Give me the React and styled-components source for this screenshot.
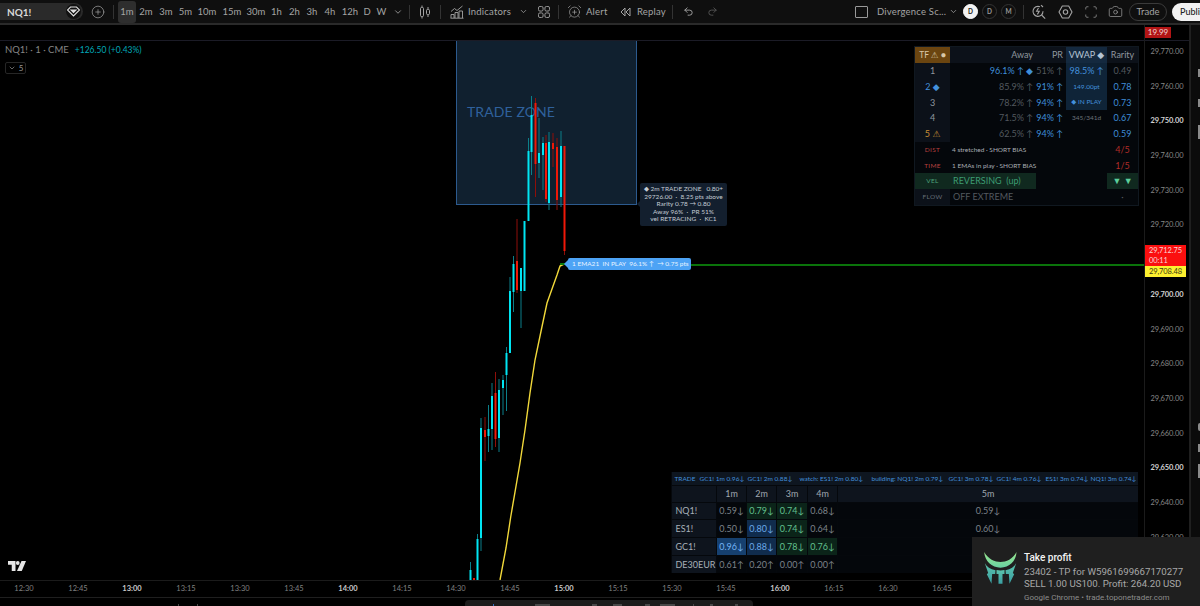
import React from "react";
import styled, { createGlobalStyle } from "styled-components";
import { ChevronDown, CirclePlus, AlarmClockPlus, Undo2, Redo2, Scan, Camera } from "lucide-react";

const GlobalStyle = createGlobalStyle`
  html, body {
    margin: 0;
    padding: 0;
    background: #000;
  }
  * {
    box-sizing: border-box;
  }
`;

const intervals = [
  ["1m", 18, true],
  ["2m", 20],
  ["3m", 20],
  ["5m", 19],
  ["10m", 24],
  ["15m", 26],
  ["30m", 22],
  ["1h", 19],
  ["2h", 17],
  ["3h", 18],
  ["4h", 18],
  ["12h", 22],
  ["D", 12],
  ["W", 17],
];

const prices = [
  ["29,770.00"],
  ["29,760.00"],
  ["29,750.00", true],
  ["29,740.00"],
  ["29,730.00"],
  ["29,720.00"],
  [""],
  ["29,700.00", true],
  ["29,690.00"],
  ["29,680.00"],
  ["29,670.00"],
  ["29,660.00"],
  ["29,650.00", true],
  ["29,640.00"],
  ["29,630.00"],
];

const times = [
  ["12:30"], ["12:45"], ["13:00", true], ["13:15"], ["13:30"], ["13:45"], ["14:00", true],
  ["14:15"], ["14:30"], ["14:45"], ["15:00", true], ["15:15"], ["15:30"], ["15:45"],
  ["16:00", true], ["16:15"], ["16:30"], ["16:45"],
];

// x, wick top, wick bottom, body top, body bottom, up?
const candles = [
  [470.5, 562, 580, 570, 580, true],
  [474, 578, 580, 578, 580, false],
  [477.5, 534, 580, 539, 580, true],
  [481, 418, 551, 428, 538, true],
  [485, 417, 461, 430, 437, false],
  [488.5, 405, 452, 429, 436, true],
  [492, 383, 450, 396, 429, true],
  [495.5, 372, 447, 393, 439, false],
  [499, 379, 452, 390, 438, true],
  [503, 375, 415, 380, 388, true],
  [506.5, 347, 411, 353, 375, true],
  [510, 277, 353, 291, 353, true],
  [513.5, 256, 312, 264, 292, true],
  [517, 219, 293, 261, 290, false],
  [521, 268, 328, 268, 291, true],
  [524.5, 221, 291, 221, 291, true],
  [528.5, 138, 221, 151, 221, true],
  [531.5, 96, 175, 115, 152, true],
  [535.5, 98, 197, 103, 164, false],
  [539, 118, 178, 153, 163, true],
  [543, 137, 190, 143, 155, true],
  [546, 135, 202, 143, 199, false],
  [549, 132, 210, 142, 203, true],
  [553, 133, 167, 143, 149, false],
  [557, 138, 210, 147, 200, false],
  [561, 131, 207, 146, 197, true],
  [564.5, 146, 255, 146, 251, false],
];

const awayRows = [
  { tf: "1", away: "96.1% ↑ ◆", hot: true, pr: "51% ↑", prHot: false, vwap: "98.5% ↑", rarity: "0.49", rare: false },
  { tf: "2 ◆", tfTone: "blue", away: "85.9% ↑", pr: "91% ↑", prHot: true, note: "149.00pt", rarity: "0.78", rare: true },
  { tf: "3", away: "78.2% ↑", pr: "94% ↑", prHot: true, note: "◆ IN PLAY", rarity: "0.73", rare: true },
  { tf: "4", away: "71.5% ↑", pr: "94% ↑", prHot: true, plain: "345/341d", rarity: "0.67", rare: true },
  { tf: "5 ⚠", tfTone: "orange", away: "62.5% ↑", pr: "94% ↑", prHot: true, rarity: "0.59", rare: true },
];

const scanRows = [
  ["NQ1!", ["0.59↓"], ["0.79↓", "green"], ["0.74↓", "green"], ["0.68↓"], ["0.59↓"]],
  ["ES1!", ["0.50↓"], ["0.80↓", "blue"], ["0.74↓", "green"], ["0.64↓"], ["0.60↓"]],
  ["GC1!", ["0.96↓", "strong"], ["0.88↓", "blue"], ["0.78↓", "green"], ["0.76↓", "green"], [""]],
  ["DE30EUR", ["0.61↑"], ["0.20↑"], ["0.00↑"], ["0.00↑"], [""]],
];

const banner = [
  ["TRADE", 25],
  ["GC1! 1m 0.96↓", 48],
  ["GC1! 2m 0.88↓", 52],
  ["watch: ES1! 2m 0.80↓", 72],
  ["building: NQ1! 2m 0.79↓", 77],
  ["GC1! 3m 0.78↓", 48],
  ["GC1! 4m 0.76↓", 49],
  ["ES1! 3m 0.74↓", 45],
  ["NQ1! 3m 0.74↓", 46],
];

const footerMarks = [
  { ml: 178, w: 1 },
  { ml: 18, w: 1 },
];

const tabMarks = [
  { ml: 28, w: 1, color: "#2f6fc0" },
  { ml: 41, w: 15 },
  { ml: 42, w: 5 },
  { ml: 16, w: 9 },
  { ml: 23, w: 5 },
  { ml: 10, w: 15 },
  { ml: 18, w: 1 },
  { ml: 16, w: 3 },
  { ml: 22, w: 3 },
];

const CandleIcon = () => (
  <svg width="14" height="14" viewBox="0 0 14 14" fill="none" stroke="currentColor" strokeWidth="1">
    <path d="M4 0.5v2M4 11.5v2M10 2v2.5M10 9.5V12" />
    <rect x="2.5" y="2.5" width="3" height="9" rx="1" />
    <rect x="8.5" y="4.5" width="3" height="5" rx="1" />
  </svg>
);

const IndicatorsIcon = () => (
  <svg width="14" height="14" viewBox="0 0 14 14" fill="none" stroke="currentColor" strokeWidth="0.9">
    <path d="M1 6.5 4.5 3.5 7 5.5 12.5 1" />
    <path d="M1 13V9.5h3V13M5 13V7.5h3V13M9 13V6h3.5v7" />
    <path d="M0.5 13.2h13" />
  </svg>
);

const GridIcon = () => (
  <svg width="12" height="12" viewBox="0 0 13 13" fill="none" stroke="currentColor" strokeWidth="1">
    <rect x="0.5" y="0.5" width="5" height="5" rx="1.6" />
    <rect x="7.5" y="0.5" width="5" height="5" rx="1.6" />
    <rect x="0.5" y="7.5" width="5" height="5" rx="1.6" />
    <rect x="7.5" y="7.5" width="5" height="5" rx="1.6" />
  </svg>
);

const ReplayIcon = () => (
  <svg width="11" height="10" viewBox="0 0 11 10" fill="none" stroke="currentColor" strokeWidth="1">
    <path d="M5 1 1 5l4 4ZM10 1 6 5l4 4Z" />
  </svg>
);

const DiamondIcon = () => (
  <svg width="13" height="11" viewBox="0 0 13 11" fill="none" stroke="currentColor" strokeWidth="1.1">
    <path d="M3.5 1h6l3 3-6 6-6-6Z" />
    <path d="M4 4h5L6.5 6.5Z" fill="currentColor" />
  </svg>
);

const MagicIcon = () => (
  <svg width="16" height="16" viewBox="0 0 16 16" fill="none" stroke="currentColor" strokeWidth="1.1">
    <path d="M9 2.8a5 5 0 1 0 3 4.5" />
    <path d="M7.5 4 5.6 7.3h2.6L6.4 10.4" />
    <path d="M10.6 11l3.6 3.6" />
    <path d="M10 1.2 12 3" />
  </svg>
);

const SettingsIcon = () => (
  <svg width="15" height="14" viewBox="0 0 15 14" fill="none" stroke="currentColor" strokeWidth="1.1">
    <path d="M4.3 1h6.4l3.3 6-3.3 6H4.3L1 7Z" strokeLinejoin="round" />
    <circle cx="7.5" cy="7" r="2.2" />
  </svg>
);

const TvLogo = () => (
  <svg width="20" height="10" viewBox="0 0 36 20" fill="#e6e6e6">
    <path d="M0 0h15v20H7.5V7.5H0Z" />
    <circle cx="19.5" cy="4" r="3.8" />
    <path d="M27 0h9l-8.5 20H18Z" />
  </svg>
);

const ProfitLogo = () => (
  <svg width="37" height="35" viewBox="60 80 110 105">
    <defs>
      <linearGradient id="horn" x1="0" y1="0" x2="0" y2="1">
        <stop offset="0" stopColor="#9ae68d" />
        <stop offset="1" stopColor="#68d2a2" />
      </linearGradient>
      <linearGradient id="body" x1="0" y1="0" x2="0" y2="1">
        <stop offset="0" stopColor="#5cc4ac" />
        <stop offset="1" stopColor="#3a9ea2" />
      </linearGradient>
    </defs>
    <path d="M66 83C78 104 98 113 115 113S152 104 163 83C162 110 141 130 115 130S68 110 66 83Z" fill="url(#horn)" />
    <path d="M68 117C74 128 84 135 100 138L99 149H90L88 178 74 150 78 146Z" fill="url(#body)" />
    <path d="M162 117C156 128 146 135 130 138L131 149H140L142 178 156 150 152 146Z" fill="url(#body)" />
    <path d="M103 137C111 139 119 139 127 137V149H121V178H109V149H103Z" fill="url(#body)" />
  </svg>
);

const App = () => {
  return (
    <Page>
      <GlobalStyle />
      <Toolbar>
        <SymbolPill>
          <span>NQ1!</span>
          <SymbolBadge>
            <DiamondIcon />
          </SymbolBadge>
        </SymbolPill>
        <ToolSlot $w={30}>
          <CirclePlus size={14} strokeWidth={1.2} />
        </ToolSlot>
        <Divider />
        <Gap $w={4} />
        {intervals.map(([label, w, active]) => (
          <IntervalButton key={label} $w={w} $active={active}>
            {label}
          </IntervalButton>
        ))}
        <ToolSlot $w={15}>
          <ChevronDown size={10} />
        </ToolSlot>
        <Gap $w={4} />
        <Divider />
        <ToolSlot $w={30}>
          <CandleIcon />
        </ToolSlot>
        <Divider />
        <Gap $w={9} />
        <IndicatorsIcon />
        <ToolLabel $ml={4} $w={50}>Indicators</ToolLabel>
        <ToolSlot $w={11}>
          <ChevronDown size={9} />
        </ToolSlot>
        <ToolSlot $w={29}>
          <GridIcon />
        </ToolSlot>
        <Divider />
        <Gap $w={8} />
        <AlarmClockPlus size={15} strokeWidth={1.1} />
        <ToolLabel $ml={4} $w={27}>Alert</ToolLabel>
        <Gap $w={7} />
        <ReplayIcon />
        <ToolLabel $ml={6} $w={35}>Replay</ToolLabel>
        <Divider />
        <ToolSlot $w={30}>
          <Undo2 size={11} />
        </ToolSlot>
        <ToolSlot $w={18} $dim>
          <Redo2 size={11} />
        </ToolSlot>
        <Spacer />
        <CheckBox />
        <ToolLabel $ml={9} $w={70}>Divergence Sc...</ToolLabel>
        <ToolSlot $w={13}>
          <ChevronDown size={9} />
        </ToolSlot>
        <Gap $w={3} />
        <ModeDot $on>D</ModeDot>
        <ModeDot>D</ModeDot>
        <ModeDot>M</ModeDot>
        <Gap $w={3} />
        <Divider />
        <ToolSlot $w={29}>
          <MagicIcon />
        </ToolSlot>
        <ToolSlot $w={25}>
          <SettingsIcon />
        </ToolSlot>
        <ToolSlot $w={25}>
          <Scan size={14} strokeWidth={1.2} />
        </ToolSlot>
        <ToolSlot $w={25}>
          <Camera size={15} strokeWidth={1.1} />
        </ToolSlot>
        <Gap $w={1} />
        <TradePill>Trade</TradePill>
        <PublishPill>Publish</PublishPill>
      </Toolbar>
      <Band />
      <Body>
        <Workspace>
          <ChartRow>
            <ChartColumn>
              <TopStrip />
              <Chart>
                <ChartDrawing viewBox="0 41 1144 539">
                  {candles.map(([x, wickTop, wickBottom, bodyTop, bodyBottom, up]) => (
                    <g key={x}>
                      <line x1={x} x2={x} y1={wickTop} y2={wickBottom} stroke={up ? "#0b7f8a" : "#8f0f0a"} strokeWidth="1" />
                      <line x1={x} x2={x} y1={bodyTop} y2={bodyBottom} stroke={up ? "#00e5f2" : "#f01808"} strokeWidth="2" />
                    </g>
                  ))}
                  <path
                    d="M500 580 506 548 510.7 517 520 463 525 430 530 393 535 360 541.7 328 547 303 552.7 287 557 275 560 266 564 264"
                    fill="none"
                    stroke="#f2d93a"
                    strokeWidth="1.4"
                  />
                  <line x1="560" x2="566" y1="264" y2="264" stroke="#0a7a0a" strokeWidth="2" />
                  <line x1="691" x2="1144" y1="265" y2="265" stroke="#0a730a" strokeWidth="2" />
                </ChartDrawing>

                <Legend>
                  <LegendLine>
                    <LegendTitle>NQ1! · 1 · CME</LegendTitle>
                    <LegendChange>+126.50 (+0.43%)</LegendChange>
                  </LegendLine>
                  <LegendToggle>
                    <ChevronDown size={8} />5
                  </LegendToggle>
                </Legend>

                <TradeZone>
                  <TradeZoneLabel>TRADE ZONE</TradeZoneLabel>
                </TradeZone>

                <ZoneTip>
                  <div>◆ 2m TRADE ZONE &nbsp; 0.80+</div>
                  <div>29726.00 &nbsp;·&nbsp; 8.25 pts above</div>
                  <div>Rarity 0.78 → 0.80</div>
                  <div>Away 96% &nbsp;·&nbsp; PR 51%</div>
                  <div>vel RETRACING &nbsp;·&nbsp; KC1</div>
                </ZoneTip>

                <EmaTag>1 EMA21 &nbsp;IN PLAY &nbsp;96.1% ↑ &nbsp;→ 0.75 pts</EmaTag>

                <AwayPanel>
                  <colgroup>
                    <col style={{ width: 35 }} />
                    <col style={{ width: 86 }} />
                    <col style={{ width: 30 }} />
                    <col style={{ width: 41 }} />
                    <col style={{ width: 31 }} />
                  </colgroup>
                  <thead>
                    <tr>
                      <TfHead>TF ⚠ ●</TfHead>
                      <HeadCell $align="right">Away</HeadCell>
                      <HeadCell $align="right">PR</HeadCell>
                      <VwapHead>VWAP ◆</VwapHead>
                      <HeadCell>Rarity</HeadCell>
                    </tr>
                  </thead>
                  <tbody>
                    {awayRows.map((row) => (
                      <tr key={row.tf}>
                        <TfCell $tone={row.tfTone}>{row.tf}</TfCell>
                        <ValueCell $align="right" $hot={row.hot}>{row.away}</ValueCell>
                        <ValueCell $align="right" $hot={row.prHot}>{row.pr}</ValueCell>
                        {row.plain ? (
                          <SmallCell>{row.plain}</SmallCell>
                        ) : row.note ? (
                          <VwapCell $small>{row.note}</VwapCell>
                        ) : row.vwap ? (
                          <VwapCell>{row.vwap}</VwapCell>
                        ) : (
                          <SmallCell />
                        )}
                        <ValueCell $align="center" $hot={row.rare}>{row.rarity}</ValueCell>
                      </tr>
                    ))}
                    <tr>
                      <TagCell $tone="#b8413f">DIST</TagCell>
                      <NoteCell colSpan={3}>4 stretched · SHORT BIAS</NoteCell>
                      <ScoreCell>4/5</ScoreCell>
                    </tr>
                    <tr>
                      <TagCell $tone="#b8413f">TIME</TagCell>
                      <NoteCell colSpan={3}>1 EMAs in play · SHORT BIAS</NoteCell>
                      <ScoreCell>1/5</ScoreCell>
                    </tr>
                    <tr>
                      <VelTag>VEL</VelTag>
                      <VelCell>REVERSING &nbsp;(up)</VelCell>
                      <td colSpan={2} />
                      <VelArrows>▼&nbsp;▼</VelArrows>
                    </tr>
                    <tr>
                      <TagCell $tone="#666d76" $shade>FLOW</TagCell>
                      <FlowCell colSpan={3}>OFF EXTREME</FlowCell>
                      <ValueCell $align="center">·</ValueCell>
                    </tr>
                  </tbody>
                </AwayPanel>

                <ScanPanel>
                  <colgroup>
                    <col style={{ width: 45 }} />
                    <col style={{ width: 30 }} />
                    <col style={{ width: 30 }} />
                    <col style={{ width: 31 }} />
                    <col style={{ width: 30 }} />
                    <col />
                  </colgroup>
                  <thead>
                    <tr>
                      <BannerCell colSpan={6}>
                        <BannerRow>
                          {banner.map(([text, w]) => (
                            <BannerItem key={text} $w={w}>{text}</BannerItem>
                          ))}
                        </BannerRow>
                      </BannerCell>
                    </tr>
                    <tr>
                      <ScanHead />
                      {["1m", "2m", "3m", "4m", "5m"].map((tf) => (
                        <ScanHead key={tf}>{tf}</ScanHead>
                      ))}
                    </tr>
                  </thead>
                  <tbody>
                    {scanRows.map(([symbol, ...cells]) => (
                      <tr key={symbol}>
                        <ScanSymbol>{symbol}</ScanSymbol>
                        {cells.map(([value, tone], i) => (
                          <ScanValue key={i} $tone={tone}>{value}</ScanValue>
                        ))}
                      </tr>
                    ))}
                  </tbody>
                </ScanPanel>

                <Watermark>
                  <TvLogo />
                </Watermark>
              </Chart>
            </ChartColumn>
            <PriceAxis>
              <PriceHead>
                <CountTag>19.99</CountTag>
              </PriceHead>
              <PriceList>
                {prices.map(([label, bold], i) => (
                  <PriceLabel key={i} $bold={bold}>{label}</PriceLabel>
                ))}
              </PriceList>
              <LastPrice>
                <div>29,712.75</div>
                <div>00:11</div>
              </LastPrice>
              <EmaPrice>29,708.48</EmaPrice>
            </PriceAxis>
          </ChartRow>
          <TimeAxis>
            {times.map(([label, bold]) => (
              <TimeLabel key={label} $bold={bold}>{label}</TimeLabel>
            ))}
          </TimeAxis>
          <Footer>
            {footerMarks.map((m, i) => (
              <FooterMark key={i} $ml={m.ml} $w={m.w} />
            ))}
            <FooterTab>
              {tabMarks.map((m, i) => (
                <FooterMark key={i} $ml={m.ml} $w={m.w} $color={m.color} />
              ))}
            </FooterTab>
          </Footer>
        </Workspace>
        <SideStrip>
          <SideGlyph $top={44} />
          <SideGlyph $top={22} />
          <SideGlyph $top={18} $tall />
          <SideGlyph $top={284} $round />
          <SideGlyph $top={13} />
          <SideGlyph $top={12} $tall />
        </SideStrip>
      </Body>

      <Toast>
        <ProfitLogo />
        <ToastText>
          <ToastTitle>Take profit</ToastTitle>
          <ToastLines>
            <ToastLine>23402 - TP for W5961699667170277</ToastLine>
            <ToastLine>SELL 1.00 US100. Profit: 264.20 USD</ToastLine>
          </ToastLines>
          <ToastSource>Google Chrome • trade.toponetrader.com</ToastSource>
        </ToastText>
      </Toast>
    </Page>
  );
};

export default App;

const Page = styled.div`
  position: relative;
  width: 1200px;
  height: 606px;
  overflow: hidden;
  background: #000;
  color: #b4b4b4;
  font-family: "Lato", "Liberation Sans", "DejaVu Sans", sans-serif;
`;

const Toolbar = styled.div`
  display: flex;
  align-items: center;
  height: 23px;
  background: #0f0f0f;
  color: #a4a4a4;
  font-size: 9.5px;
  white-space: nowrap;
`;

const Band = styled.div`
  height: 2px;
  background: #2a2a2a;
`;

const SymbolPill = styled.div`
  display: flex;
  align-items: center;
  justify-content: space-between;
  flex: none;
  width: 83px;
  height: 17px;
  padding: 0 2px 0 7px;
  border-radius: 0 9px 9px 0;
  background: #2a2a2a;
  color: #d8d8d8;
  font-weight: 700;
  font-size: 10px;
`;

const SymbolBadge = styled.div`
  display: flex;
  align-items: center;
  justify-content: center;
  width: 15px;
  height: 15px;
  border-radius: 50%;
  background: #121212;
  color: #e0e0e0;
`;

const ToolSlot = styled.div`
  display: flex;
  align-items: center;
  justify-content: center;
  flex: none;
  width: ${(p) => p.$w}px;
  color: ${(p) => (p.$dim ? "#555" : "inherit")};
`;

const Gap = styled.div`
  flex: none;
  width: ${(p) => p.$w}px;
`;

const Spacer = styled.div`
  flex: 1;
`;

const Divider = styled.div`
  flex: none;
  width: 1px;
  height: 14px;
  background: #333;
`;

const IntervalButton = styled.div`
  display: flex;
  align-items: center;
  justify-content: center;
  flex: none;
  width: ${(p) => p.$w}px;
  height: 22px;
  border-radius: 3px;
  background: ${(p) => (p.$active ? "#2e2e2e" : "transparent")};
`;

const ToolLabel = styled.span`
  flex: none;
  width: ${(p) => p.$w}px;
  margin-left: ${(p) => p.$ml}px;
  letter-spacing: 0.2px;
`;

const CheckBox = styled.div`
  flex: none;
  width: 13px;
  height: 12px;
  border: 1px solid #999;
  border-radius: 1px;
`;

const ModeDot = styled.div`
  display: flex;
  align-items: center;
  justify-content: center;
  flex: none;
  width: 15px;
  height: 15px;
  margin-right: 4px;
  border-radius: 50%;
  border: 1px solid ${(p) => (p.$on ? "#fff" : "#333")};
  background: ${(p) => (p.$on ? "#f2f2f2" : "transparent")};
  color: ${(p) => (p.$on ? "#222" : "#999")};
  font-size: 6.5px;
  font-weight: 700;
`;

const TradePill = styled.div`
  display: flex;
  align-items: center;
  justify-content: center;
  flex: none;
  width: 38px;
  height: 18px;
  border: 1px solid #3a3a3a;
  border-radius: 9px;
`;

const PublishPill = styled.div`
  display: flex;
  align-items: center;
  flex: none;
  width: 28px;
  height: 18px;
  margin-left: 5px;
  padding-left: 8px;
  overflow: hidden;
  border-radius: 9px 0 0 9px;
  background: #f2f2f2;
  color: #222;
  font-size: 9px;
  font-weight: 500;
`;

const Body = styled.div`
  display: flex;
  height: 581px;
`;

const Workspace = styled.div`
  display: flex;
  flex-direction: column;
  width: 1189px;
`;

const ChartRow = styled.div`
  display: flex;
  height: 555px;
`;

const ChartColumn = styled.div`
  display: flex;
  flex-direction: column;
  width: 1144px;
`;

const TopStrip = styled.div`
  height: 16px;
  border-bottom: 1px solid #1b1b26;
`;

const Chart = styled.div`
  position: relative;
  flex: 1;
  overflow: hidden;
`;

const ChartDrawing = styled.svg`
  position: absolute;
  inset: 0;
  width: 1144px;
  height: 539px;
  z-index: 2;
`;

const Legend = styled.div`
  position: absolute;
  left: 5px;
  top: 3px;
  z-index: 3;
`;

const LegendLine = styled.div`
  display: flex;
  align-items: baseline;
  gap: 6px;
  height: 14px;
`;

const LegendTitle = styled.span`
  color: #858585;
  font-size: 9.5px;
`;

const LegendChange = styled.span`
  color: #00a8b8;
  font-size: 8.5px;
`;

const LegendToggle = styled.div`
  display: flex;
  align-items: center;
  justify-content: center;
  gap: 3px;
  width: 21px;
  height: 12px;
  margin-top: 4px;
  border: 1px solid #262626;
  border-radius: 2px;
  color: #999;
  font-size: 8px;
`;

const TradeZone = styled.div`
  position: absolute;
  left: 456px;
  top: -1px;
  z-index: 1;
  width: 181px;
  height: 165px;
  border: 1px solid #2c5a8e;
  background: #10202f;
`;

const TradeZoneLabel = styled.div`
  position: absolute;
  left: 10px;
  top: 62px;
  color: #2f619c;
  font-size: 14px;
  letter-spacing: 0.1px;
  white-space: nowrap;
`;

const ZoneTip = styled.div`
  position: absolute;
  left: 640px;
  top: 142px;
  z-index: 3;
  width: 87px;
  height: 43px;
  padding-top: 2px;
  border-radius: 2px;
  background: #131f2e;
  color: #c4ccd4;
  font-size: 6.5px;
  line-height: 7.6px;
  text-align: center;
  white-space: nowrap;

  &::before {
    content: "";
    position: absolute;
    left: -3px;
    top: 18px;
    border-style: solid;
    border-width: 3px 3px 3px 0;
    border-color: transparent #131f2e transparent transparent;
  }
`;

const EmaTag = styled.div`
  position: absolute;
  left: 568px;
  top: 217px;
  z-index: 3;
  width: 123px;
  height: 12px;
  padding-left: 4px;
  border-radius: 2px;
  background: #4da3f5;
  color: #eaf4ff;
  font-size: 6.5px;
  line-height: 12px;
  white-space: nowrap;

  &::before {
    content: "";
    position: absolute;
    left: -4px;
    top: 2px;
    border-style: solid;
    border-width: 4px 4px 4px 0;
    border-color: transparent #4da3f5 transparent transparent;
  }
`;

const AwayPanel = styled.table`
  position: absolute;
  left: 915px;
  top: 6px;
  z-index: 3;
  width: 223px;
  table-layout: fixed;
  border-collapse: collapse;
  background: #04070b;
  outline: 1px solid #101820;
  font-size: 9px;
  white-space: nowrap;

  tr {
    height: 15.75px;
  }

  td,
  th {
    padding: 0;
    font-weight: 400;
  }
`;

const HeadCell = styled.th`
  padding: 0 ${(p) => (p.$align === "right" ? "3px" : "0")} 0 0 !important;
  background: #0c1119;
  color: #8f969e;
  text-align: ${(p) => p.$align || "center"};
`;

const TfHead = styled.th`
  background: #6b4510;
  color: #d9c7a8;
  text-align: center;
  font-size: 8.5px;
`;

const VwapHead = styled.th`
  background: #14293f;
  color: #b4c4d4;
  text-align: center;
`;

const TfCell = styled.td`
  background: #0c1119;
  color: ${(p) => (p.$tone === "blue" ? "#4390dc" : p.$tone === "orange" ? "#c98f36" : "#8f969e")};
  text-align: center;
`;

const ValueCell = styled.td`
  padding-right: ${(p) => (p.$align === "right" ? "3px" : "0")} !important;
  color: ${(p) => (p.$hot ? "#3f8ed8" : "#53595f")};
  text-align: ${(p) => p.$align};
`;

const VwapCell = styled.td`
  background: #0f2438;
  color: #4390dc;
  font-size: ${(p) => (p.$small ? "6.5px" : "9px")};
  text-align: center;
`;

const SmallCell = styled.td`
  color: #6b727a;
  font-size: 6.5px;
  text-align: center;
`;

const TagCell = styled.td`
  background: ${(p) => (p.$shade ? "#0c1119" : "transparent")};
  color: ${(p) => p.$tone};
  font-size: 6.5px;
  letter-spacing: 0.3px;
  text-align: center;
`;

const NoteCell = styled.td`
  padding-left: 2px !important;
  color: #a8aeb4;
  font-size: 6.5px;
`;

const ScoreCell = styled.td`
  color: #b02c28;
  text-align: center;
`;

const VelTag = styled.td`
  background: #10291f;
  color: #4fa57d;
  font-size: 6.5px;
  letter-spacing: 0.3px;
  text-align: center;
`;

const VelCell = styled.td`
  padding-left: 3px !important;
  background: #10291f;
  color: #3d9c73;
`;

const VelArrows = styled.td`
  background: #10291f;
  color: #5ccf9c;
  font-size: 9px;
  text-align: center;
`;

const FlowCell = styled.td`
  padding-left: 3px !important;
  color: #53595f;
`;

const ScanPanel = styled.table`
  position: absolute;
  left: 671px;
  top: 431px;
  z-index: 3;
  width: 467px;
  table-layout: fixed;
  border-collapse: collapse;
  background: #04070b;
  font-size: 9px;
  white-space: nowrap;

  tbody tr {
    height: 17.7px;
  }

  td,
  th {
    padding: 0;
    font-weight: 400;
  }
`;

const BannerCell = styled.th`
  height: 13px;
  background: #0e1620;
  border-bottom: 1px solid #05080c;
`;

const BannerRow = styled.div`
  display: flex;
  padding-left: 3px;
`;

const BannerItem = styled.span`
  flex: none;
  width: ${(p) => p.$w}px;
  color: #4390dc;
  font-size: 6.5px;
  text-align: left;
  white-space: nowrap;
`;

const ScanHead = styled.th`
  height: 17px;
  background: #0e141d;
  border-left: 1px solid #05080c;
  color: #a0a8b0;
  text-align: center;
`;

const ScanSymbol = styled.td`
  padding-left: 4px !important;
  background: #0e141d;
  border-top: 1px solid #05080c;
  color: #a8b0b8;
`;

const toneColors = {
  green: ["#0b2419", "#62c08f"],
  blue: ["#102c4d", "#6aa9ea"],
  strong: ["#16406f", "#74b4f5"],
};

const ScanValue = styled.td`
  background: ${(p) => (p.$tone ? toneColors[p.$tone][0] : "transparent")};
  color: ${(p) => (p.$tone ? toneColors[p.$tone][1] : "#7c838a")};
  border-left: 1px solid #05080c;
  border-top: 1px solid #05080c;
  text-align: center;
`;

const Watermark = styled.div`
  position: absolute;
  left: 7px;
  top: 520px;
  z-index: 3;
  display: flex;
`;

const PriceAxis = styled.div`
  position: relative;
  width: 45px;
  border-left: 1px solid #1b1b1b;
`;

const PriceHead = styled.div`
  height: 16px;
  padding-top: 2px;
  border-bottom: 1px solid #1b1b26;
`;

const CountTag = styled.div`
  width: 26px;
  height: 11px;
  background: #b31515;
  color: #f0d8d8;
  font-size: 8px;
  line-height: 11px;
  text-align: center;
`;

const PriceList = styled.div`
  margin-top: -6px;
`;

const PriceLabel = styled.div`
  height: 34.7px;
  color: ${(p) => (p.$bold ? "#d0d0d0" : "#868686")};
  font-size: 7.5px;
  font-weight: ${(p) => (p.$bold ? 700 : 400)};
  line-height: 34.7px;
  letter-spacing: -0.1px;
  text-align: center;
`;

const LastPrice = styled.div`
  position: absolute;
  left: 0;
  top: 220px;
  width: 41px;
  height: 21px;
  padding: 1px 0 0 4px;
  background: #fb0f0f;
  color: #f9d4d4;
  font-size: 7.5px;
  line-height: 9.5px;
  letter-spacing: -0.1px;
`;

const EmaPrice = styled.div`
  position: absolute;
  left: 0;
  top: 241px;
  width: 41px;
  height: 11px;
  padding-left: 4px;
  background: #fdf02f;
  color: #3a3a10;
  font-size: 7.5px;
  line-height: 11px;
  letter-spacing: -0.1px;
`;

const TimeAxis = styled.div`
  display: flex;
  height: 18px;
  margin-left: -3px;
  border-top: 1px solid #1b1b1b;
  border-bottom: 1px solid #1f1f1f;
  overflow: hidden;
`;

const TimeLabel = styled.div`
  flex: none;
  width: 54px;
  color: ${(p) => (p.$bold ? "#c8c8c8" : "#808080")};
  font-size: 7.5px;
  font-weight: ${(p) => (p.$bold ? 700 : 400)};
  line-height: 16px;
  text-align: center;
`;

const Footer = styled.div`
  display: flex;
  flex: 1;
  align-items: flex-end;
  padding-top: 2px;
`;

const FooterTab = styled.div`
  display: flex;
  align-items: flex-end;
  width: 288px;
  height: 6px;
  margin-left: 267px;
  border-radius: 4px 4px 0 0;
  background: #1c1c1c;
`;

const FooterMark = styled.span`
  flex: none;
  width: ${(p) => p.$w}px;
  height: 2px;
  margin-left: ${(p) => p.$ml}px;
  background: ${(p) => p.$color || "#484848"};
`;

const SideStrip = styled.div`
  display: flex;
  flex-direction: column;
  align-items: flex-end;
  flex: 1;
  border-left: 2px solid #1f1f1f;
  background: #0b0b0b;
`;

const SideGlyph = styled.div`
  width: 2px;
  height: ${(p) => (p.$tall ? "14px" : "8px")};
  margin-top: ${(p) => p.$top}px;
  border-radius: ${(p) => (p.$round ? "2px 0 0 2px" : "0")};
  background: #8a8a8a;
`;

const Toast = styled.div`
  position: absolute;
  right: 0;
  bottom: 0;
  z-index: 5;
  display: flex;
  gap: 5px;
  width: 228px;
  height: 69px;
  padding: 14px 0 0 10px;
  background: #1f1f1f;
`;

const ToastText = styled.div`
  white-space: nowrap;
  font-family: "Roboto", "Noto Sans", sans-serif;
`;

const ToastTitle = styled.div`
  color: #f2f2f2;
  font-size: 10px;
  font-weight: 500;
  line-height: 13px;
`;

const ToastLines = styled.div`
  margin-top: 2px;
`;

const ToastLine = styled.div`
  color: #a8a8a8;
  font-size: 9.7px;
  line-height: 12.4px;
`;

const ToastSource = styled.div`
  margin-top: 1.5px;
  color: #8c8c8c;
  font-size: 8px;
  line-height: 11px;
`;
